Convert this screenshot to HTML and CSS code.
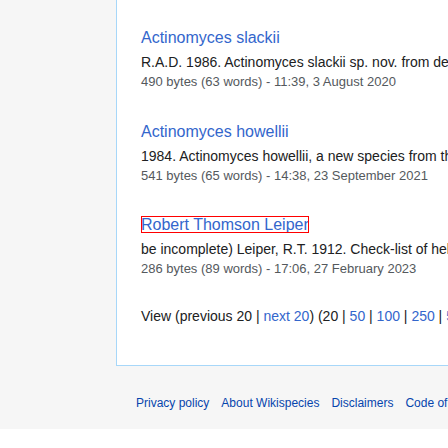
FILE: index.html
```html
<!DOCTYPE html>
<html lang="en">
<head>
<meta charset="utf-8">
<title>Search results - Wikispecies</title>
<link rel="stylesheet" href="styles.css">
</head>
<body>
<div class="page">
  <div class="main">
    <div class="sidebar"></div>
    <div class="content">
      <ul class="results">
        <li class="result">
          <div class="heading"><a href="#">Actinomyces slackii</a></div>
          <div class="snippet">R.A.D. 1986. Actinomyces slackii sp. nov. from dental plaque of dairy cattle. International Journal</div>
          <div class="data">490 bytes (63 words) - 11:39, 3 August 2020</div>
        </li>
        <li class="result">
          <div class="heading"><a href="#">Actinomyces howellii</a></div>
          <div class="snippet">1984. Actinomyces howellii, a new species from the dental plaque of dairy cattle. International Journal</div>
          <div class="data">541 bytes (65 words) - 14:38, 23 September 2021</div>
        </li>
        <li class="result">
          <div class="heading"><a href="#" class="focused">Robert Thomson Leiper</a></div>
          <div class="snippet">be incomplete) Leiper, R.T. 1912. Check-list of helminths parasitic in cattle. Journal</div>
          <div class="data">286 bytes (89 words) - 17:06, 27 February 2023</div>
        </li>
      </ul>
      <p class="pager">View (previous 20 | <a href="#">next 20</a>) (20 | <a href="#">50</a> | <a href="#">100</a> | <a href="#">250</a> | <a href="#">500</a>)</p>
    </div>
  </div>
  <ul class="footer">
    <li><a href="#">Privacy policy</a></li>
    <li><a href="#">About Wikispecies</a></li>
    <li><a href="#">Disclaimers</a></li>
    <li><a href="#">Code of Conduct</a></li>
    <li><a href="#">Mobile view</a></li>
  </ul>
</div>
</body>
</html>
```

FILE: styles.css
```css
html, body {
  margin: 0;
  padding: 0;
  background: #ffffff;
  overflow: hidden;
}

body {
  font-family: "Liberation Sans", Arial, sans-serif;
  color: #202122;
}

a {
  color: #3366cc;
  text-decoration: none;
}

.page {
  background: #f6f6f6;
}

.main {
  display: flex;
}

.sidebar {
  width: 116px;
  flex: none;
}

.content {
  flex: 1;
  min-width: 0;
  background: #ffffff;
  border-left: 1px solid #a7d7f9;
  border-bottom: 1px solid #a7d7f9;
  padding: 26px 0 40.5px 24px;
  white-space: nowrap;
  overflow: hidden;
}

.results {
  list-style: none;
  margin: 0;
  padding: 0;
}

.result {
  margin: 0 0 27.5px 0;
}

.heading {
  font-size: 16px;
  line-height: 24px;
}

.focused {
  outline: 1px solid #ff0000;
  outline-offset: -1px;
}

.snippet {
  margin-top: 2px;
  font-size: 14px;
  line-height: 20px;
}

.data {
  font-size: 13px;
  line-height: 20px;
  color: #54595d;
}

.pager {
  margin: 0;
  font-size: 14px;
  line-height: 18px;
}

.footer {
  list-style: none;
  margin: 0;
  padding: 28px 0 17px 136px;
  display: flex;
  gap: 12px;
  white-space: nowrap;
  font-size: 12px;
  line-height: 18px;
}

.footer a {
  color: #0645ad;
}
```
